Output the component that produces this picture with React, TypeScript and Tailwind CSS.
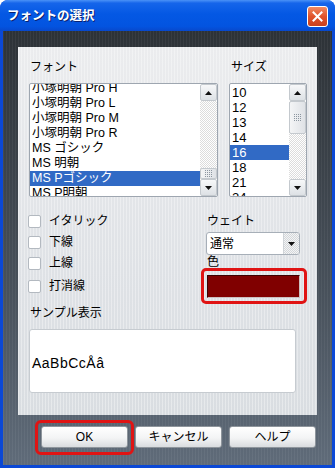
import React from 'react';

const fonts = [
  '小塚明朝 Pro H',
  '小塚明朝 Pro L',
  '小塚明朝 Pro M',
  '小塚明朝 Pro R',
  'MS ゴシック',
  'MS 明朝',
  'MS Pゴシック',
  'MS P明朝',
];

const sizes = ['10', '12', '13', '14', '16', '18', '21', '24'];

function Arrow({ down }: { down?: boolean }) {
  return (
    <svg width="7" height="4" viewBox="0 0 7 4" aria-hidden="true">
      <path d={down ? 'M0 0 L7 0 L3.5 4 Z' : 'M0 4 L3.5 0 L7 4 Z'} fill="#111" />
    </svg>
  );
}

function Grip() {
  const dots = [];
  for (let r = 0; r < 4; r++) {
    for (let c = 0; c < 4; c++) {
      dots.push(<rect key={`${r}-${c}`} x={c * 2} y={r * 2} width="1" height="1" fill="#8c96a0" />);
    }
  }
  return (
    <svg width="8" height="8" viewBox="0 0 8 8" aria-hidden="true">
      {dots}
    </svg>
  );
}

function ScrollButton({ down }: { down?: boolean }) {
  return (
    <div className="h-[17px] shrink-0 flex items-center justify-center rounded-[2px] border border-[#c4c9ce] bg-[linear-gradient(180deg,#f7f8f9,#dde1e5)]">
      <Arrow down={down} />
    </div>
  );
}

// scrollbar: spacer above thumb, then thumb, then rest of the track
function Scrollbar({ before, thumb }: { before: number; thumb: number }) {
  return (
    <div className="w-[17px] shrink-0 flex flex-col">
      <ScrollButton />
      <div className="flex-1 flex flex-col bg-[image:repeating-conic-gradient(#dcdcdc_0%_25%,#ffffff_0%_50%)] bg-[length:2px_2px]">
        <div style={{ height: before }} />
        <div
          className="shrink-0 flex items-center justify-center rounded-[2px] border border-[#c4c9ce] bg-[linear-gradient(90deg,#f4f5f6,#dfe2e6)]"
          style={{ height: thumb }}
        >
          <Grip />
        </div>
      </div>
      <ScrollButton down />
    </div>
  );
}

function ListBox({
  items,
  selected,
  offset,
  textClass,
  before,
  thumb,
}: {
  items: string[];
  selected: string;
  offset: number;
  textClass: string;
  before: number;
  thumb: number;
}) {
  return (
    <div className="h-[114px] flex border border-[#9ea6b0] rounded-[2px] bg-white overflow-hidden">
      <div className="flex-1 overflow-hidden">
        <div style={{ marginTop: offset }}>
          {items.map((it) => (
            <div
              key={it}
              className={
                'h-[15px] leading-[15px] pl-[2px] whitespace-nowrap ' +
                textClass +
                (it === selected ? ' bg-[#316ac5] text-white' : ' text-black')
              }
            >
              {it}
            </div>
          ))}
        </div>
      </div>
      <Scrollbar before={before} thumb={thumb} />
    </div>
  );
}

function Check({ label }: { label: string }) {
  return (
    <div className="h-[14px] flex items-center gap-[8px]">
      <div className="w-[13px] h-[13px] bg-white border border-[#b3b9c0] rounded-[2px]" />
      <span className="text-[12px] leading-[14px]">{label}</span>
    </div>
  );
}

function Button({ label }: { label: string }) {
  return (
    <div className="w-[87px] h-[22px] flex items-center justify-center rounded-[3px] border border-[#8e959c] bg-[linear-gradient(180deg,#ffffff_0%,#f3f4f5_55%,#d9dcdf_100%)] text-[12px] text-black">
      {label}
    </div>
  );
}

export default function App() {
  return (
    <div className="w-[335px] h-[468px] flex flex-col bg-[#0b48d6] rounded-t-[8px] overflow-hidden font-['Liberation_Sans','Noto_Sans_CJK_JP',sans-serif] text-black">
      {/* Title bar */}
      <div className="h-[31px] shrink-0 flex items-center justify-between pl-[7px] pr-[7px] pt-[2px] bg-[linear-gradient(180deg,#4a92f7_0%,#1565ea_10%,#0458e4_45%,#0354e0_85%,#0848cc_100%)]">
        <span className="text-white font-bold text-[12.5px] [text-shadow:1px_1px_0_#0a2270]">フォントの選択</span>
        <div className="w-[21px] h-[21px] flex items-center justify-center rounded-[3px] border border-white bg-[linear-gradient(180deg,#f08a62_0%,#e0532b_50%,#c9401d_100%)]">
          <svg width="11" height="11" viewBox="0 0 11 11" aria-hidden="true">
            <path d="M1.5 1.5 L9.5 9.5 M9.5 1.5 L1.5 9.5" stroke="#fff" strokeWidth="2" strokeLinecap="square" />
          </svg>
        </div>
      </div>

      {/* Body */}
      <div className="flex-1 mx-[3px] mb-[3px] flex flex-col px-[15px] pt-[16px] bg-[image:repeating-linear-gradient(90deg,rgba(255,255,255,0.05)_0px,rgba(255,255,255,0.05)_1px,transparent_1px,transparent_3px),linear-gradient(180deg,#2d3237,#48515b_60%,#5f6b79)]">
        {/* Panel */}
        <div className="h-[368px] shrink-0 flex flex-col pt-[13px] pl-[11px] pr-[10px] bg-[image:repeating-linear-gradient(90deg,rgba(255,255,255,0.35)_0px,rgba(255,255,255,0.35)_1px,transparent_1px,transparent_3px),linear-gradient(180deg,#ebecee,#dfe2e6_60%,#d9dde1)]">
          <div className="flex gap-[11px]">
            <div className="w-[189px] flex flex-col">
              <div className="text-[12px] leading-[14px] pl-[1px]">フォント</div>
              <div className="mt-[9px]">
                <ListBox items={fonts} selected="MS Pゴシック" offset={-3} textClass="text-[12.5px]" before={67} thumb={11} />
              </div>
            </div>
            <div className="w-[78px] flex flex-col">
              <div className="text-[12px] leading-[14px] pl-[2px]">サイズ</div>
              <div className="mt-[9px]">
                <ListBox items={sizes} selected="16" offset={1} textClass="text-[13px]" before={0} thumb={33} />
              </div>
            </div>
          </div>

          {/* Style options */}
          <div className="mt-[17px] flex">
            <div className="w-[178px] flex flex-col gap-[7px] -ml-[1px]">
              <Check label="イタリック" />
              <Check label="下線" />
              <Check label="上線" />
              <div className="mt-[2px]">
                <Check label="打消線" />
              </div>
            </div>
            <div className="w-[106px] flex flex-col">
              <div className="text-[12px] leading-[14px] pl-[6px]">ウェイト</div>
              <div className="mt-[4px] ml-[5px] w-[94px] h-[23px] flex bg-white border border-[#a7afb8] rounded-[3px] overflow-hidden">
                <div className="flex-1 flex items-center pl-[3px] text-[12px]">通常</div>
                <div className="w-[16px] flex items-center justify-center border-l border-[#d0d4d8] bg-[image:repeating-conic-gradient(#d4d7da_0%_25%,#f3f4f5_0%_50%)] bg-[length:2px_2px]">
                  <Arrow down />
                </div>
              </div>
              <div className="mt-[1px] h-[12px] text-[12px] leading-[12px] pl-[6px]">色</div>
              <div className="w-[106px] h-[36px] border-[3px] border-[#e01414] rounded-[5px] pl-[3px] pr-[4px] pt-[4px] pb-[3px]">
                <div className="w-full h-full bg-[#800000] border border-t-[#3c0000] border-l-[#3c0000] border-b-[#cdbfbf] border-r-[#cdbfbf]" />
              </div>
            </div>
          </div>

          {/* Sample */}
          <div className="mt-[2px] text-[12px] leading-[14px] pl-[1px]">サンプル表示</div>
          <div className="mt-[9px] w-[267px] h-[64px] flex items-center pl-[2px] pt-[4px] bg-white border border-[#c6cbd0] rounded-[3px]">
            <span className="text-[14px] tracking-[0.5px]">AaBbCcÅâ</span>
          </div>
        </div>

        {/* Buttons */}
        <div className="mt-[5px] flex items-start">
          <div className="ml-[17px] border-[3px] border-[#e01414] rounded-[6px] p-[3px] pb-[4px]">
            <Button label="OK" />
          </div>
          <div className="mt-[6px] ml-[1px]">
            <Button label="キャンセル" />
          </div>
          <div className="mt-[6px] ml-[7px]">
            <Button label="ヘルプ" />
          </div>
        </div>
      </div>
    </div>
  );
}
